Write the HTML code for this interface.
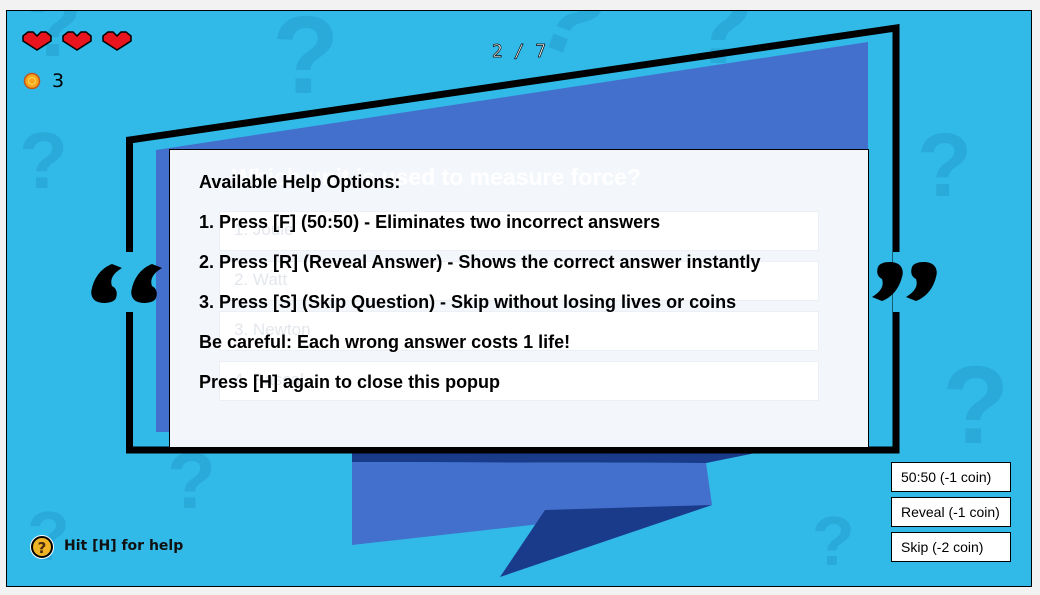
<!DOCTYPE html>
<html><head><meta charset="utf-8"><style>
*{margin:0;padding:0;box-sizing:border-box}
html,body{width:1040px;height:595px;overflow:hidden}
body{background:#f2f2f2;position:relative;font-family:"Liberation Sans",Arial,sans-serif}
#stage{position:absolute;left:6px;top:10px;width:1026px;height:577px;background:#31b9e8;border:1px solid #000;overflow:hidden}
.q{position:absolute;color:#29aad8;font-weight:bold;font-family:"Liberation Sans",sans-serif;line-height:1}
.pop{position:absolute;left:169px;top:149px;width:700px;height:299px;background:#f3f6fb;border:1px solid #000}
.ans{position:absolute;left:219px;width:600px;height:40px;background:#fff;border:1px solid #eceff3;color:#e3e7ec;font-size:17px;padding:8px 0 0 14px}
.ht{position:absolute;left:199px;font-weight:bold;font-size:18px;color:#000;white-space:nowrap}
.btn{position:absolute;left:891px;width:120px;height:30px;background:#fff;border:1px solid #000;font-size:14px;padding:6px 0 0 9px;white-space:nowrap}
</style></head><body>
<div id="stage">
<div class="q" style="left:265px;top:-10px;font-size:110px">?</div>
<div class="q" style="left:530px;top:-50px;font-size:110px;transform:rotate(20deg)">?</div>
<div class="q" style="left:680px;top:-40px;font-size:110px">?</div>
<div class="q" style="left:12px;top:110px;font-size:80px">?</div>
<div class="q" style="left:20px;top:-30px;font-size:90px">?</div>
<div class="q" style="left:910px;top:110px;font-size:90px">?</div>
<div class="q" style="left:935px;top:340px;font-size:110px">?</div>
<div class="q" style="left:805px;top:495px;font-size:70px">?</div>
<div class="q" style="left:20px;top:490px;font-size:70px">?</div>
<div class="q" style="left:160px;top:430px;font-size:80px">?</div>
</div>
<svg width="1040" height="595" style="position:absolute;left:0;top:0">
<polygon points="352,448 780,448 706,463 352,462" fill="#1a3a8a"/>
<polygon points="352,462 706,463 712,505 352,545" fill="#4470cd"/>
<polygon points="545,510 712,505 500,577" fill="#1a3a8a"/>
<polygon points="156,150 868,42 868,432 156,432" fill="#4470cd"/>
<path d="M129.5,252 V140 L896,28 V450 H129.5 V312" fill="none" stroke="#000" stroke-width="7"/>
<rect x="893" y="252" width="8" height="60" fill="#31b9e8"/>
<g fill="#000">
<path transform="translate(90,262)" d="M22,2 L32,6 C22,12 20,18 22,24 C26,26 28,30 26,36 C24,41 14,42 8,40 C2,38 0,32 2,26 C5,14 12,6 22,2 Z"/>
<path transform="translate(130,262)" d="M22,2 L32,6 C22,12 20,18 22,24 C26,26 28,30 26,36 C24,41 14,42 8,40 C2,38 0,32 2,26 C5,14 12,6 22,2 Z"/>
<path transform="translate(904,303) rotate(180)" d="M22,2 L32,6 C22,12 20,18 22,24 C26,26 28,30 26,36 C24,41 14,42 8,40 C2,38 0,32 2,26 C5,14 12,6 22,2 Z"/>
<path transform="translate(938,303) rotate(180)" d="M22,2 L32,6 C22,12 20,18 22,24 C26,26 28,30 26,36 C24,41 14,42 8,40 C2,38 0,32 2,26 C5,14 12,6 22,2 Z"/>
</g>
<g fill="#e8141e" stroke="#000" stroke-width="1.5">
<path d="M23,36 L28,32 L33,32 L37,36 L41,32 L46,32 L51,36 L51,41 L37,50 L23,41 Z"/>
<path d="M63,36 L68,32 L73,32 L77,36 L81,32 L86,32 L91,36 L91,41 L77,50 L63,41 Z"/>
<path d="M103,36 L108,32 L113,32 L117,36 L121,32 L126,32 L131,36 L131,41 L117,50 L103,41 Z"/>
</g>
<circle cx="32" cy="81" r="7.5" fill="#f7a51c" stroke="#c2561a" stroke-width="1.5"/>
<circle cx="32" cy="81" r="3.5" fill="none" stroke="#fcd34d" stroke-width="1.2"/>
<text x="519" y="57" text-anchor="middle" font-family="DejaVu Sans Mono,monospace" font-size="18" fill="#fff" stroke="#000" stroke-width="0.7">2 / 7</text>
<circle cx="42" cy="547" r="12" fill="#fff"/>
<circle cx="42" cy="547" r="10" fill="#f0b323" stroke="#000" stroke-width="2"/>
<text x="42" y="553" text-anchor="middle" font-family="DejaVu Sans,sans-serif" font-weight="bold" font-size="15" fill="#4a2a10">?</text>
</svg>
<div style="position:absolute;left:52px;top:70px;font-size:19px;font-family:'DejaVu Sans',sans-serif">3</div>
<div style="position:absolute;left:64px;top:538px;font-size:14px;font-weight:bold;font-family:'DejaVu Sans',sans-serif;color:#111">Hit [H] for help</div>
<div class="pop"></div>
<div style="position:absolute;left:232px;top:164px;color:#fff;font-weight:bold;font-size:23px;white-space:nowrap">Which unit is used to measure force?</div>
<div class="ans" style="top:211px">1. Joule</div>
<div class="ans" style="top:261px">2. Watt</div>
<div class="ans" style="top:311px">3. Newton</div>
<div class="ans" style="top:361px">4. Pascal</div>
<div class="ht" style="top:172px">Available Help Options:</div>
<div class="ht" style="top:212px">1. Press [F] (50:50) - Eliminates two incorrect answers</div>
<div class="ht" style="top:252px">2. Press [R] (Reveal Answer) - Shows the correct answer instantly</div>
<div class="ht" style="top:292px">3. Press [S] (Skip Question) - Skip without losing lives or coins</div>
<div class="ht" style="top:332px">Be careful: Each wrong answer costs 1 life!</div>
<div class="ht" style="top:372px">Press [H] again to close this popup</div>
<div class="btn" style="top:462px">50:50 (-1 coin)</div>
<div class="btn" style="top:497px">Reveal (-1 coin)</div>
<div class="btn" style="top:532px">Skip (-2 coin)</div>
</body></html>
